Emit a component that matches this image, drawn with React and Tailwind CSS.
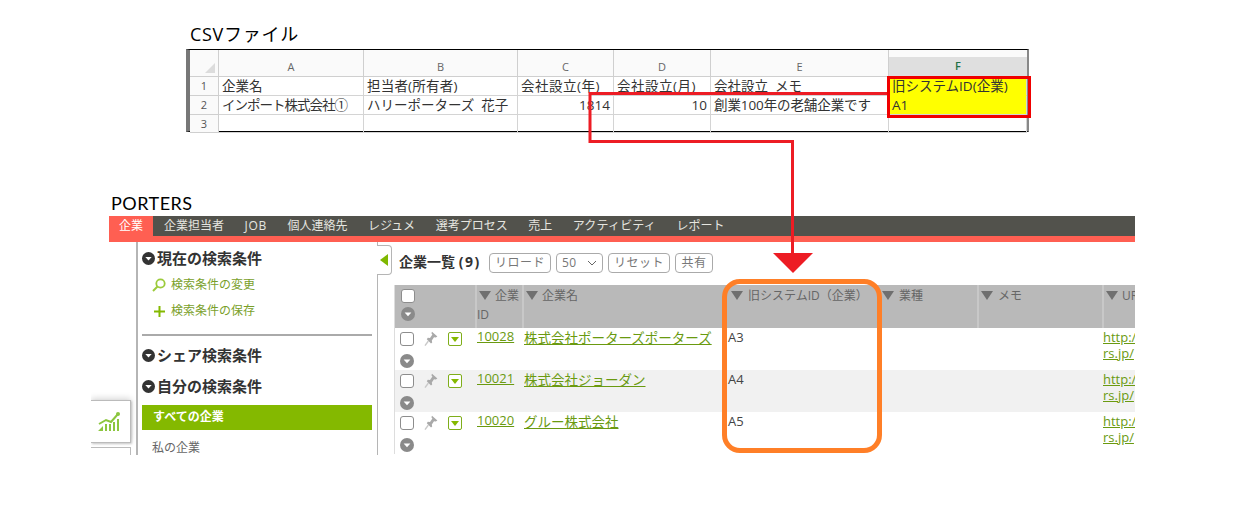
const font = "font-['Open_Sans','Noto_Sans_CJK_JP',sans-serif]";

const Tri = ({ className = "" }) => (
  <svg viewBox="0 0 12 9" className={`w-[12px] h-[9px] shrink-0 ${className}`}><path d="M0 0H12L6 9Z" fill="#6f6f6f" /></svg>
);
const DownCircle = ({ size = 14, bg = "#8a8a8a" }) => (
  <svg viewBox="0 0 14 14" style={{ width: size, height: size }} className="shrink-0">
    <circle cx="7" cy="7" r="7" fill={bg} /><path d="M3.6 5.4H10.4L7 9.2Z" fill="#fff" />
  </svg>
);
const Pin = () => (
  <svg viewBox="0 0 14 16" className="w-[14px] h-[16px] shrink-0">
    <path d="M8 0.8L13.4 5.6L11.8 6.6L10 6.2L7.8 9.4L8.2 11.6L7 12.4L2.8 8.2L3.8 6.8L6 7L8.4 3.6L7.4 2.2Z" fill="#a9a9a9" />
    <path d="M4.4 10L1 14.6" stroke="#c9c9c9" strokeWidth="1.4" />
  </svg>
);
const Menu = () => (
  <span className="w-[14px] h-[14px] border border-[#7fae1a] rounded-[2px] flex items-center justify-center shrink-0 bg-white">
    <svg viewBox="0 0 8 5" className="w-[8px] h-[5px]"><path d="M0 0H8L4 5Z" fill="#84b900" /></svg>
  </span>
);
const Check = ({ className = "" }) => <span className={`w-[14px] h-[14px] border border-[#8d8d8d] rounded-[3px] bg-white shrink-0 ${className}`} />;

const xlCols = "grid-cols-[29px_145px_154px_96px_97px_178px_138px]";
const XCell = ({ children, className = "" }) => (
  <div className={`border-r border-b border-[#d4d4d4] pl-[3px] whitespace-nowrap overflow-hidden text-[13.5px] leading-[18px] text-[#333] ${className}`}>{children}</div>
);
const XHead = ({ children, className = "" }) => (
  <div className={`h-[27px] pt-[8px] border-r border-b border-[#cfcfcf] text-center text-[11px] leading-[18px] text-[#666] ${className}`}>{children}</div>
);
const XNum = ({ children }) => (
  <div className="bg-[#fafafa] border-r border-b border-[#cfcfcf] text-center text-[11px] leading-[17px] text-[#555]">{children}</div>
);

const SideHead = ({ children, className = "" }) => (
  <div className={`flex items-center gap-[2px] ml-[4px] text-[15px] leading-[20px] font-bold text-[#333] ${className}`}>
    <DownCircle size={13} bg="#333" />{children}
  </div>
);

const Btn = ({ children, className = "" }) => (
  <span className={`h-[20px] border border-[#aaa] rounded-[4px] flex items-center text-[12px] tracking-[0.5px] text-[#777] ${className}`}>{children}</span>
);

const tableCols = "grid-cols-[80px_47px_204px_154px_97px_125px_33px]";
const HCell = ({ children, className = "" }) => (
  <div className={`h-[43px] pt-[1px] text-[12px] leading-[19px] text-[#666] overflow-hidden whitespace-nowrap ${className}`}>{children}</div>
);
const Link = ({ children, className = "" }) => <a className={`underline text-[#6a9a10] ${className}`}>{children}</a>;

const Row = ({ id, name, old, shaded }) => (
  <div className={`grid ${tableCols} h-[42px] text-[13px] leading-[16px] ${shaded ? "bg-[#f1f1f1]" : "bg-white"}`}>
    <div className="pl-[5px] pt-[3px]">
      <div className="flex items-center">
        <Check />
        <span className="ml-[10px]"><Pin /></span>
        <span className="ml-[10px]"><Menu /></span>
      </div>
      <div className="mt-[7px]"><DownCircle /></div>
    </div>
    <div className="pl-[2px]"><Link>{id}</Link></div>
    <div className="pl-[2px] pt-[2px] whitespace-nowrap text-[13.5px]"><Link>{name}</Link></div>
    <div className="pl-[2px] pt-[1px] text-[#444]">{old}</div>
    <div />
    <div />
    <div className="pl-[1px] pt-[1px] whitespace-nowrap overflow-hidden"><Link>http://porte</Link><br /><Link>rs.jp/</Link></div>
  </div>
);

export default function App() {
  return (
    <div className={`relative w-[1244px] h-[514px] bg-white overflow-hidden ${font}`}>
      {/* CSV */}
      <div className="pt-[22px] pl-[186px]">
        <div className="h-[24px] pl-[4px] text-[18px] leading-[24px] tracking-[0.7px] text-black">CSVファイル</div>
        <div className="mt-[3px] w-[843px] h-[83px] border border-black border-l-[4px] border-l-[#777] border-r-[2px] border-r-[#888] bg-white">
          <div className={`grid ${xlCols}`}>
            <XHead className="relative bg-[#fafafa]">
              <svg viewBox="0 0 10 10" className="absolute right-[3px] bottom-[3px] w-[10px] h-[10px]"><path d="M10 0V10H0Z" fill="#dcdcdc" /></svg>
            </XHead>
            <XHead className="bg-[#fafafa]">A</XHead>
            <XHead className="bg-[#fafafa]">B</XHead>
            <XHead className="bg-[#fafafa]">C</XHead>
            <XHead className="bg-[#fafafa]">D</XHead>
            <XHead className="bg-[#fafafa]">E</XHead>
            <div className="h-[27px] pt-[7px] bg-[#fafafa] border-b border-[#cfcfcf]">
              <div className="h-[19px] bg-[#dfdfdf] text-center text-[11px] leading-[18px] font-semibold text-[#1f7246]">F</div>
            </div>

            <XNum>1</XNum>
            <XCell>企業名</XCell>
            <XCell className="tracking-[0.2px]">担当者(所有者)</XCell>
            <XCell className="tracking-[0.5px]">会社設立(年)</XCell>
            <XCell className="tracking-[0.5px]">会社設立(月)</XCell>
            <XCell>会社設立&nbsp;&nbsp;メモ</XCell>
            <XCell className="bg-[#ffff00] border-b-[#ffff00]">旧システムID(企業)</XCell>

            <XNum>2</XNum>
            <XCell className="tracking-[-1px]">インポート株式会社①</XCell>
            <XCell>ハリーポーターズ&nbsp;&nbsp;花子</XCell>
            <XCell className="text-right pr-[3px]">1814</XCell>
            <XCell className="text-right pr-[3px]">10</XCell>
            <XCell className="tracking-[-0.1px]">創業100年の老舗企業です</XCell>
            <XCell className="bg-[#ffff00]">A1</XCell>

            <XNum>3</XNum>
            <XCell /><XCell /><XCell /><XCell /><XCell /><XCell />
          </div>
        </div>
      </div>

      {/* PORTERS */}
      <div className="mt-[59px] pl-[111px] h-[25px] text-[18px] leading-[24px] tracking-[0.5px] text-black font-['Lato',sans-serif]">PORTERS</div>
      <div className="ml-[91px] w-[1044px] h-[239px] overflow-hidden flex flex-col">
        <div className="ml-[18px] shrink-0 border-b-[6px] border-[#ff5f52] bg-[#52524c] h-[26px]">
          <div className="flex h-[20px] items-center text-[12px] text-[#e6e6e0] whitespace-nowrap">
            <span className="w-[44px] h-[20px] bg-[#ff5f52] text-white text-center leading-[20px] mr-[11px]">企業</span>
            <div className="flex gap-[20.5px]">
              <span>企業担当者</span><span className="tracking-[0.7px]">JOB</span><span>個人連絡先</span><span>レジュメ</span><span>選考プロセス</span><span>売上</span><span className="tracking-[0.2px]">アクティビティ</span><span>レポート</span>
            </div>
          </div>
        </div>

        <div className="flex flex-1 min-h-0">
          {/* rail */}
          <div className="w-[45px] shrink-0 pt-[158px]">
            <div className="w-[40px] h-[43px] bg-white border-r border-b border-t border-[#bbb] shadow-[0_-2px_6px_rgba(0,0,0,0.15),1px_1px_2px_rgba(0,0,0,0.2)] flex items-center justify-center">
              <svg viewBox="0 0 24 22" className="w-[24px] h-[22px] mr-[3px]">
                <path d="M2 13L9 9L14 11L21 3" stroke="#8cc63f" strokeWidth="2" fill="none" />
                <circle cx="21" cy="3" r="2" fill="#8cc63f" />
                <path d="M1 20L6 15V20ZM8 13H10V20H8ZM12 13H14V20H12ZM16 11H18V20H16ZM20 8H22V20H20Z" fill="#8cc63f" />
              </svg>
            </div>
            <div className="mt-[4px] w-[40px] h-[20px] border-t border-r border-[#bbb]" />
          </div>

          {/* sidebar */}
          <div className="w-[241px] shrink-0 border-l-2 border-[#b5b5b5] pt-[6px]">
            <SideHead>現在の検索条件</SideHead>
            <div className="mt-[9px] ml-[14px] flex items-center gap-[5px] h-[16px] text-[12px] text-[#7a9f2a]">
              <svg viewBox="0 0 14 14" className="w-[14px] h-[14px] shrink-0">
                <circle cx="8.5" cy="5.5" r="4.2" fill="none" stroke="#9ccb3b" strokeWidth="1.8" />
                <path d="M5.5 8.5L1 13" stroke="#9ccb3b" strokeWidth="2" />
              </svg>
              検索条件の変更
            </div>
            <div className="mt-[10px] ml-[15px] flex items-center gap-[5px] h-[16px] text-[12px] text-[#7a9f2a]">
              <svg viewBox="0 0 13 13" className="w-[13px] h-[13px] shrink-0"><path d="M6.5 1V12M1 6.5H12" stroke="#84b900" strokeWidth="2" /></svg>
              検索条件の保存
            </div>
            <div className="mt-[15px] ml-[4px] w-[230px] h-[2px] bg-[#aaa]" />
            <SideHead className="mt-[9px]">シェア検索条件</SideHead>
            <SideHead className="mt-[11px]">自分の検索条件</SideHead>
            <div className="mt-[9px] ml-[4px] w-[230px] h-[25px] bg-[#84b900] pl-[11px] text-[12px] leading-[23px] font-bold text-white">すべての企業</div>
            <div className="mt-[9px] ml-[14px] text-[12px] leading-[18px] text-[#666]">私の企業</div>
          </div>

          {/* toggle + main */}
          <div className="flex-1 min-w-0 flex flex-col border-l border-[#b5b5b5]">
            <div className="flex items-center h-[37px] shrink-0 pt-[3px]">
              <div className="-ml-[1px] w-[15px] h-[30px] mt-[-5px] bg-white border border-l-0 border-[#b5b5b5] rounded-r-[4px] flex items-center justify-center">
                <svg viewBox="0 0 8 12" className="w-[8px] h-[12px]"><path d="M8 0V12L0 6Z" fill="#7fb800" /></svg>
              </div>
              <span className="ml-[7px] text-[14px] leading-[20px] font-bold text-[#333] w-[90px] whitespace-nowrap">企業一覧 <span className="tracking-[1.5px]">(9)</span></span>
              <div className="flex gap-[5px] text-[#777] translate-y-[1px]">
                <Btn className="w-[62px] justify-center">リロード</Btn>
                <Btn className="w-[47px] justify-between px-[5px] text-[#555]">
                  50
                  <svg viewBox="0 0 10 6" className="w-[10px] h-[6px]"><path d="M1 1L5 5L9 1" stroke="#666" fill="none" /></svg>
                </Btn>
                <Btn className="w-[62px] justify-center">リセット</Btn>
                <Btn className="w-[38px] justify-center text-[#555]">共有</Btn>
              </div>
            </div>
            <div className="ml-[16px] mt-[6px] border-l border-[#ddd]">
              <div className={`grid ${tableCols} bg-[#b9b9b9]`}>
                <div className="h-[43px] pl-[6px] pt-[4px]">
                  <Check className="block" />
                  <div className="mt-[4px]"><DownCircle /></div>
                </div>
                <HCell className="border-l-2 border-[#c8c8c8]"><div className="flex items-center gap-[4px] pl-[2px]"><Tri />企業</div><div>ID</div></HCell>
                <HCell className="border-l-2 border-[#c8c8c8] pl-[2px]"><div className="flex items-center gap-[4px]"><Tri />企業名</div></HCell>
                <HCell className="pl-[5px]"><div className="flex items-center gap-[5px]"><Tri />旧システムID（企業）</div></HCell>
                <HCell className="pl-[2px]"><div className="flex items-center gap-[5px]"><Tri />業種</div></HCell>
                <HCell className="border-l-2 border-[#c8c8c8] pl-[2px]"><div className="flex items-center gap-[5px]"><Tri />メモ</div></HCell>
                <HCell className="border-l-2 border-[#c8c8c8] pl-[2px]"><div className="flex items-center gap-[4px]"><Tri />URL</div></HCell>
              </div>
              <Row id="10028" name="株式会社ポーターズポーターズ" old="A3" />
              <Row id="10021" name="株式会社ジョーダン" old="A4" shaded />
              <Row id="10020" name="グルー株式会社" old="A5" />
            </div>
          </div>
        </div>
      </div>

      {/* annotations */}
      <div className="absolute left-[887px] top-[76px] w-[144px] h-[42px] border-[3px] border-[#f00000]" />
      <div className="absolute left-[722px] top-[279px] w-[160px] h-[174px] border-[5px] border-[#ff7f27] rounded-[18px]" />
      <svg className="absolute left-0 top-0 w-[1244px] h-[514px] pointer-events-none" viewBox="0 0 1244 514">
        <path d="M887 93.5H590V141.5H792.5V254" fill="none" stroke="#ed1c24" strokeWidth="3" />
        <path d="M773 253H813L793 273Z" fill="#ed1c24" />
      </svg>
    </div>
  );
}
